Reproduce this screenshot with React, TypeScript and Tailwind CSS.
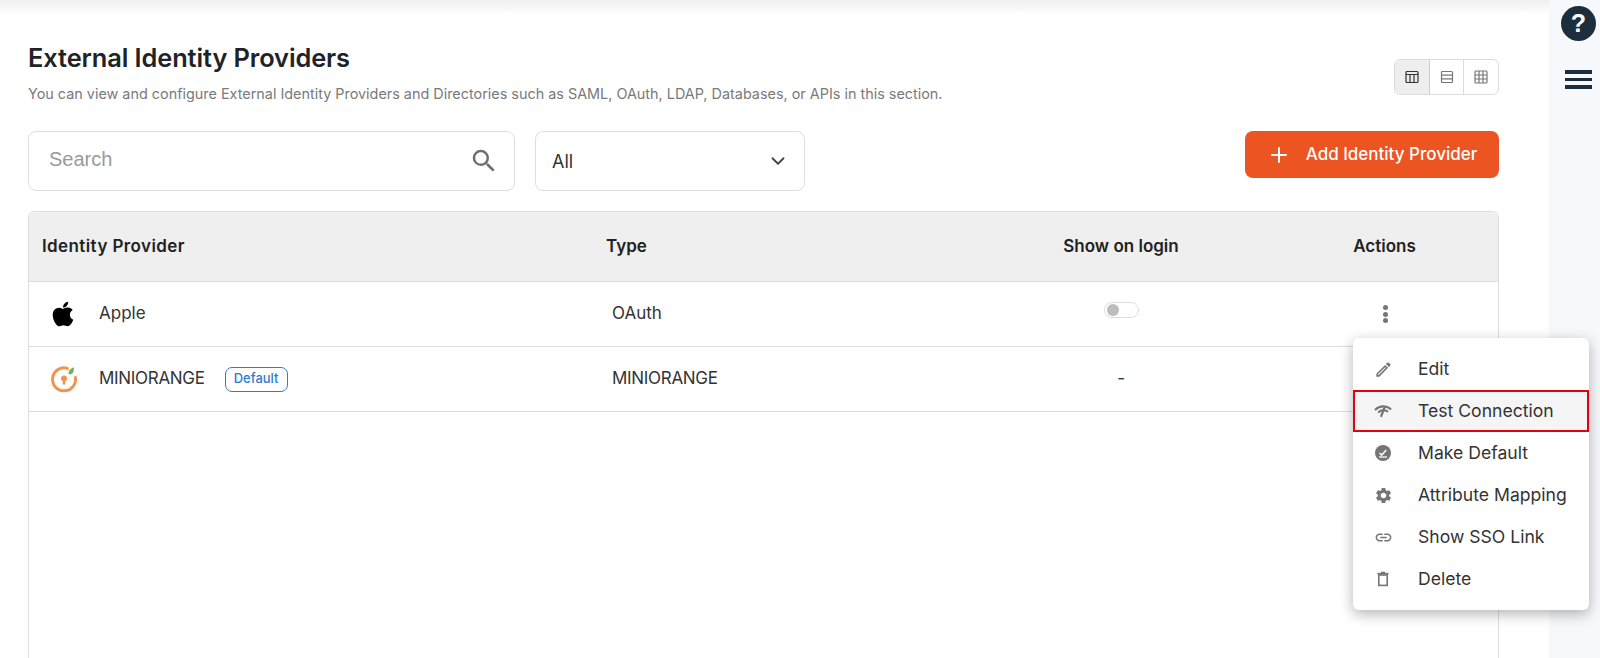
import React from "react";
import { FaApple } from "react-icons/fa";
import { MdOutlineEdit, MdSettings, MdLink, MdSearch } from "react-icons/md";
import { ChevronDown, Plus } from "lucide-react";

function TestIcon() {
  return (
    <svg width="20" height="20" viewBox="0 0 20 20" fill="none" stroke="#757575" strokeLinecap="round">
      <path d="M2.6 8.4C6.5 4.4 13.5 4.4 17.4 7.8" strokeWidth="2.2" />
      <path d="M5.8 11C8 8.8 12 8.8 14.4 10.4" strokeWidth="2" />
      <path d="M11.4 7L8.2 15" strokeWidth="2.2" />
    </svg>
  );
}

function DefaultIcon() {
  return (
    <svg width="20" height="20" viewBox="0 0 20 20" fill="none">
      <circle cx="10" cy="10" r="8" fill="#757575" />
      <path d="M6.5 10l2.2 2.1 4.6-5" stroke="#fff" strokeWidth="1.5" />
      <path d="M6 14h8" stroke="#fff" strokeWidth="1.3" />
    </svg>
  );
}

function TrashIcon() {
  return (
    <svg width="20" height="20" viewBox="0 0 20 20" fill="none" stroke="#757575">
      <rect x="5.8" y="6" width="8.4" height="10.4" strokeWidth="1.6" />
      <path d="M4.4 4.6h11.2" strokeWidth="1.5" />
      <path d="M8 3.4h4" strokeWidth="1.4" />
    </svg>
  );
}

function Logo() {
  return (
    <svg width="28" height="28" viewBox="0 0 28 28" fill="none">
      <path d="M17.5 3.4A11.5 11.5 0 1 0 25.4 12.5" stroke="#ee9550" strokeWidth="3" strokeLinecap="round" />
      <circle cx="14" cy="13.5" r="3" fill="#ee9550" />
      <path d="M13 15h2l.4 4.5h-2.8z" fill="#ee9550" />
      <path d="M18.4 8.4c0-3 2.4-5.2 5.4-6.2.6 3.4-.8 6.8-3.4 7.4z" fill="#74b45e" />
    </svg>
  );
}

const menu = [
  { label: "Edit", icon: <MdOutlineEdit size={19} color="#757575" /> },
  { label: "Test Connection", icon: <TestIcon />, active: true },
  { label: "Make Default", icon: <DefaultIcon /> },
  { label: "Attribute Mapping", icon: <MdSettings size={19} color="#757575" /> },
  { label: "Show SSO Link", icon: <MdLink size={19} color="#757575" /> },
  { label: "Delete", icon: <TrashIcon /> },
];

export default function App() {
  return (
    <div className="flex h-[658px] w-[1600px] overflow-hidden bg-white font-['Inter',sans-serif] text-[#2b2b2b]">
      <main className="relative w-[1549px] shrink-0 bg-gradient-to-b from-[#efefef] to-white to-[14px] bg-no-repeat pl-[28px] pr-[50px] pt-[43px]">
        <div className="flex items-start justify-between">
          <div>
            <h1 className="text-[25.4px] font-semibold leading-[30px] tracking-[-0.1px] text-[#1f2328]">External Identity Providers</h1>
            <p className="mt-[11px] text-[14.4px] leading-[20px] text-[#7a7a7a]">You can view and configure External Identity Providers and Directories such as SAML, OAuth, LDAP, Databases, or APIs in this section.</p>
          </div>
          <div className="mt-[16px] flex h-[36px] w-[105px] overflow-hidden rounded-[6px] border border-[#dddddd]">
            <div className="flex flex-1 items-center justify-center border-r border-[#cccccc] bg-[#eeeeee]">
              <svg width="14" height="14" viewBox="0 0 14 14" fill="none" stroke="#333" strokeWidth="1.2"><rect x="1" y="1.5" width="12" height="11" rx="1" /><path d="M1 4.5h12M5 4.5v8M9 4.5v8" /></svg>
            </div>
            <div className="flex flex-1 items-center justify-center border-r border-[#dddddd]">
              <svg width="14" height="14" viewBox="0 0 14 14" fill="none" stroke="#777" strokeWidth="1.2"><rect x="1.5" y="1.5" width="11" height="11" rx="1" /><path d="M1.5 5.2h11M1.5 8.8h11" /></svg>
            </div>
            <div className="flex flex-1 items-center justify-center">
              <svg width="14" height="14" viewBox="0 0 14 14" fill="none" stroke="#777" strokeWidth="1.2"><rect x="1" y="1" width="12" height="12" rx="1" /><path d="M5 1v12M9 1v12M1 5h12M1 9h12" /></svg>
            </div>
          </div>
        </div>

        <div className="mt-[27px] flex items-start">
          <div className="flex h-[60px] w-[487px] items-center justify-between rounded-[8px] border border-[#dedede] pl-[20px] pr-[15px]">
            <span className="pb-[4px] font-['Liberation_Sans',sans-serif] text-[20px] text-[#9a9a9a]">Search</span>
            <MdSearch size={30} color="#6e6e6e" />
          </div>
          <div className="ml-[20px] flex h-[60px] w-[270px] items-center justify-between rounded-[8px] border border-[#dedede] pl-[16px] pr-[15px]">
            <span className="text-[18px] text-[#333333]">All</span>
            <ChevronDown size={22} color="#444" />
          </div>
          <button className="ml-auto flex h-[47px] w-[254px] items-center justify-center gap-[15px] rounded-[8px] bg-[#ec5522] text-[17px] font-medium text-white">
            <Plus size={24} color="#fff" />
            <span>Add Identity Provider</span>
          </button>
        </div>

        <div className="mt-[20px] h-[600px] rounded-t-[6px] border border-[#dddddd]">
          <div className="grid h-[70px] grid-cols-[566px_404px_244px_1fr] items-center rounded-t-[6px] border-b border-[#dddddd] bg-[#efefef] text-[17px] font-semibold text-[#222222]">
            <div className="pl-[13px] tracking-[0.4px]">Identity Provider</div>
            <div className="pl-[11px]">Type</div>
            <div className="text-center">Show on login</div>
            <div className="pl-[28px] text-center">Actions</div>
          </div>
          <div className="grid h-[65px] grid-cols-[566px_404px_244px_1fr] items-center border-b border-[#dddddd] text-[17px] text-[#333333]">
            <div className="flex items-center pl-[20px]">
              <FaApple size={28} color="#000" />
              <span className="ml-[22px]">Apple</span>
            </div>
            <div className="pl-[17px]">OAuth</div>
            <div className="flex justify-center pb-[8px]">
              <span className="flex h-[16px] w-[35px] items-center rounded-full border border-[#dddddd] bg-white pl-[2px]">
                <span className="h-[12px] w-[12px] rounded-full bg-[#bdbdbd]" />
              </span>
            </div>
            <div className="flex justify-center pl-[29px]">
              <span className="flex flex-col gap-[1.5px]">
                <span className="h-[5px] w-[5px] rounded-full bg-[#757575]" />
                <span className="h-[5px] w-[5px] rounded-full bg-[#757575]" />
                <span className="h-[5px] w-[5px] rounded-full bg-[#757575]" />
              </span>
            </div>
          </div>
          <div className="grid h-[65px] grid-cols-[566px_404px_244px_1fr] items-center border-b border-[#dddddd] text-[17px] tracking-[-0.3px] text-[#333333]">
            <div className="flex items-center pl-[21px]">
              <Logo />
              <span className="ml-[21px]">MINIORANGE</span>
              <span className="ml-[20px] flex h-[25px] items-center rounded-[7px] border border-[#2f7bd0] px-[8px] text-[13px] font-medium tracking-normal text-[#2f7bd0]">Default</span>
            </div>
            <div className="pl-[17px]">MINIORANGE</div>
            <div className="text-center">-</div>
            <div />
          </div>
        </div>

        <div className="absolute left-[1353px] top-[338px] z-10 w-[236px] rounded-[6px] bg-white py-[10px] shadow-[0_4px_14px_rgba(0,0,0,0.3)]">
          {menu.map((m) => (
            <div
              key={m.label}
              className={
                m.active
                  ? "flex h-[42px] items-center border-2 border-[#e3000f] bg-[#f5f5f5] pl-[18px] text-[17.6px] text-[#333333]"
                  : "flex h-[42px] items-center pl-[20px] text-[17.6px] text-[#333333]"
              }
            >
              <span className="flex w-[20px] justify-center">{m.icon}</span>
              <span className="ml-[25px] whitespace-nowrap">{m.label}</span>
            </div>
          ))}
        </div>
      </main>
      <aside className="flex flex-1 flex-col items-center bg-[#f6f8fb] pl-[8px] pt-[6px]">
        <div className="flex h-[35px] w-[35px] items-center justify-center rounded-full bg-[#1c2e3d] font-['Liberation_Sans',sans-serif] text-[25px] font-bold text-white">?</div>
        <div className="mt-[29px] flex w-[27px] flex-col gap-[4px]">
          <span className="h-[4px] bg-[#1c2e3d]" />
          <span className="h-[3px] bg-[#1c2e3d]" />
          <span className="h-[4px] bg-[#1c2e3d]" />
        </div>
      </aside>
    </div>
  );
}
